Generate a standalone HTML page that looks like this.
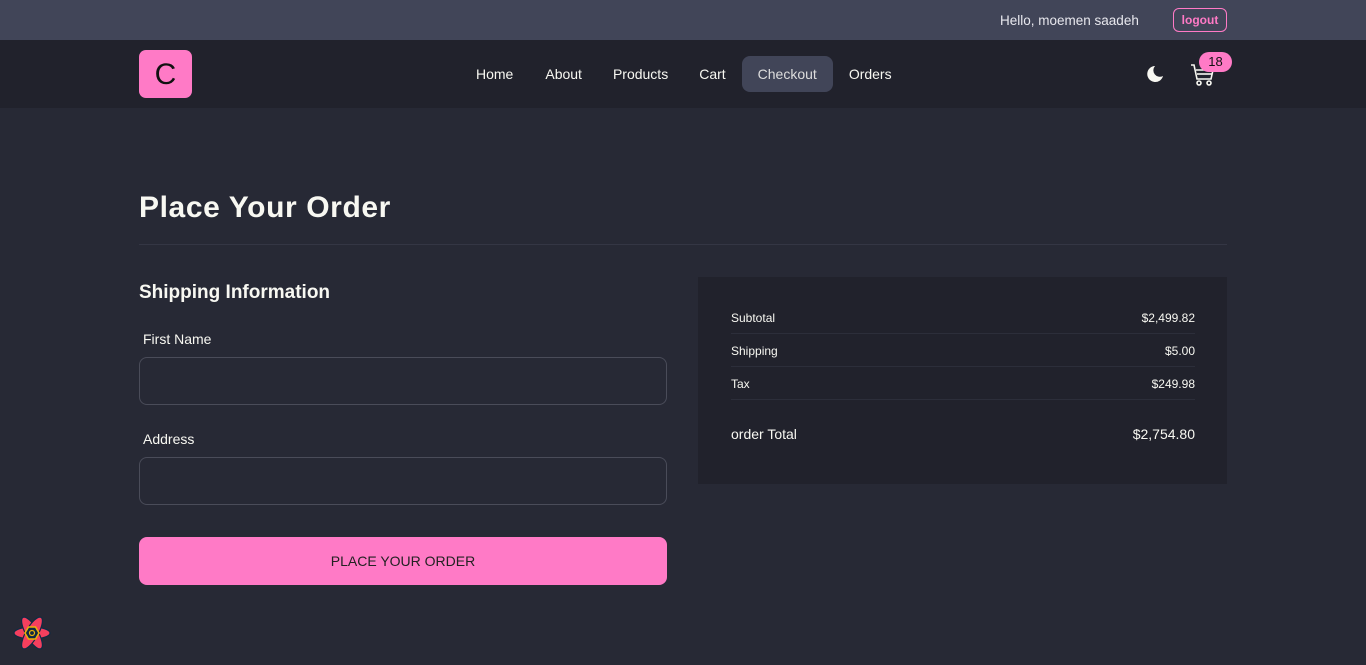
<!DOCTYPE html>
<html><head><meta charset="utf-8"><style>
*{box-sizing:border-box;margin:0;padding:0}
body{width:1366px;height:665px;background:#272935;font-family:"Liberation Sans",sans-serif;color:#f8f8f2;position:relative;overflow:hidden}
.top{height:40px;background:#414558;position:relative}
.top .hello{position:absolute;left:1000px;top:13px;font-size:13.5px;color:#e8e8ee}
.top .lo{position:absolute;left:1173px;top:8px;width:54px;height:24px;border:1px solid #ff7ac6;border-radius:6px;color:#ff7ac6;font-size:12px;font-weight:bold;text-align:center;line-height:23px}
.nav{height:68px;background:#21222c;position:relative}
.logo{position:absolute;left:139px;top:10px;width:53px;height:48px;background:#ff7ac6;border-radius:7px;color:#111;font-size:30px;text-align:center;line-height:50px}
.links{position:absolute;left:460px;top:16px;display:flex;font-size:14px}
.links span{padding:0 16px;height:36px;line-height:36px;border-radius:8px}
.links span:nth-child(3){padding:0 15px}
.links .act{background:#414558;color:#ddd}
.badge{position:absolute;left:1199px;width:33px;height:20px;border-radius:10px;background:#ff7ac6;color:#111;font-size:13px;text-align:center;line-height:20px}
h1{position:absolute;left:139px;top:191px;font-size:30px;font-weight:bold;letter-spacing:0.6px}
.hr{position:absolute;left:139px;top:244px;width:1088px;height:1px;background:#343644}
h2{position:absolute;left:139px;top:282px;font-size:19px;font-weight:bold}
.lbl{position:absolute;left:143px;font-size:14px}
.inp{position:absolute;left:139px;width:528px;height:48px;border:1px solid #4a4c59;border-radius:8px}
.btn{position:absolute;left:139px;top:537px;width:528px;height:48px;background:#ff7ac6;border-radius:8px;color:#222;font-size:14px;text-align:center;line-height:48px}
.card{position:absolute;left:698px;top:277px;width:529px;height:207px;background:#21222c}
.row{position:absolute;left:33px;width:464px;display:flex;justify-content:space-between;font-size:12px;border-bottom:1px solid #2c2e3a;padding-bottom:8px}
</style></head><body>
<div class="top"><span class="hello">Hello, moemen saadeh</span><span class="lo">logout</span></div>
<div class="nav"><div class="logo">C</div>
<div class="links"><span>Home</span><span>About</span><span>Products</span><span>Cart</span><span class="act">Checkout</span><span>Orders</span></div>
<svg style="position:absolute;left:1146px;top:25px" width="18" height="18" viewBox="0 0 18 18"><path d="M9 1a8 8 0 1 0 8 10A6.5 6.5 0 0 1 9 1z" fill="#f8f8f2"/></svg>
<svg style="position:absolute;left:1190px;top:22px" width="26" height="26" viewBox="0 0 26 26" fill="none" stroke="#f8f8f2" stroke-width="1.6"><path d="M1 3h3l3 14h14l2-9H6"/><path d="M7 12h15"/><circle cx="9" cy="21" r="2"/><circle cx="19" cy="21" r="2"/></svg>
<div class="badge" style="top:12px">18</div>
</div>
<h1>Place Your Order</h1><div class="hr"></div>
<h2>Shipping Information</h2>
<div class="lbl" style="top:331px">First Name</div><div class="inp" style="top:357px"></div>
<div class="lbl" style="top:431px">Address</div><div class="inp" style="top:457px"></div>
<div class="btn">PLACE YOUR ORDER</div>
<div class="card">
<div class="row" style="top:34px"><span>Subtotal</span><span>$2,499.82</span></div>
<div class="row" style="top:67px"><span>Shipping</span><span>$5.00</span></div>
<div class="row" style="top:100px"><span>Tax</span><span>$249.98</span></div>
<div class="row" style="top:149px;font-size:14px;border:none"><span>order Total</span><span>$2,754.80</span></div>
</div>
<svg style="position:absolute;left:12px;top:614px" width="40" height="38" viewBox="-20 -19 40 38"><g fill="#f43f5e" stroke="#0f2a44" stroke-width="1.2"><ellipse rx="18" ry="6"/><ellipse rx="18" ry="6" transform="rotate(60)"/><ellipse rx="18" ry="6" transform="rotate(120)"/></g><polygon points="7,0 3.5,6 -3.5,6 -7,0 -3.5,-6 3.5,-6" fill="#0f2a44" stroke="#eab308" stroke-width="1.5"/><circle r="2.5" fill="none" stroke="#eab308" stroke-width="1.2"/></svg>
</body></html>
